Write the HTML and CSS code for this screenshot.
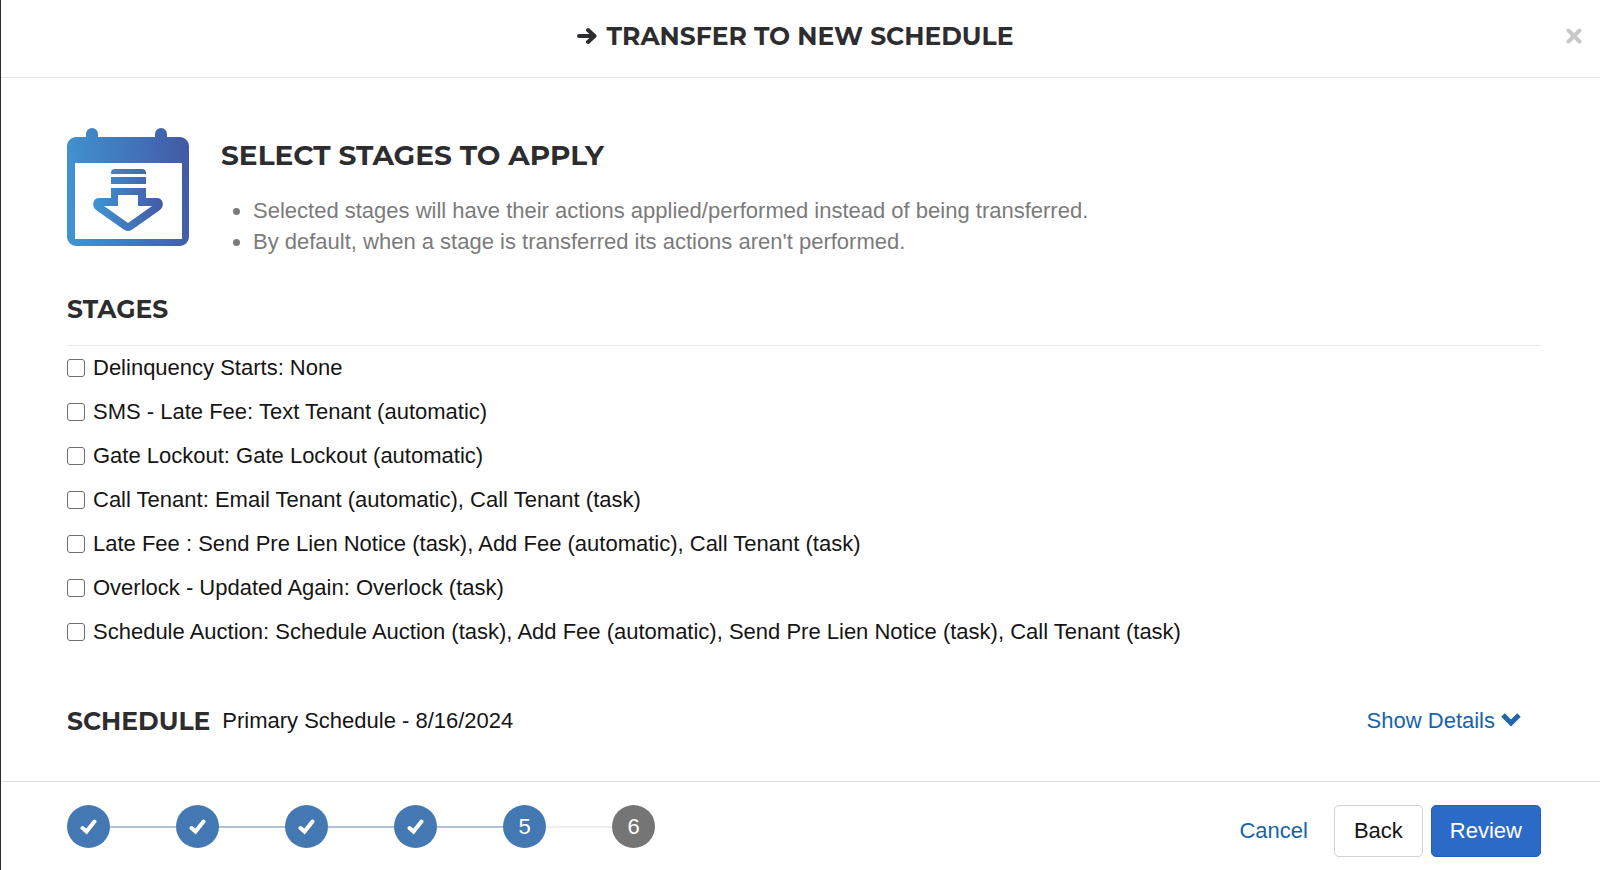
FILE: index.html
```html
<!DOCTYPE html>
<html lang="en">
<head>
<meta charset="utf-8">
<title>Transfer to New Schedule</title>
<link rel="stylesheet" href="styles.css">
</head>
<body>
<div class="modal" role="dialog" aria-labelledby="modal-title">
  <header class="modal-header">
    <h1 class="modal-title" id="modal-title">
      <svg class="icon-arrow" viewBox="0 0 20 18" aria-hidden="true"><path d="M2 9H17M11 3L17.500 9L11 15"/></svg>
      <span>TRANSFER TO NEW SCHEDULE</span>
    </h1>
    <button class="close" type="button" aria-label="Close">
      <svg class="icon-close" viewBox="0 0 16 16" aria-hidden="true"><path d="M2.500 2.500L13.500 13.500M13.500 2.500L2.500 13.500"/></svg>
    </button>
  </header>

  <main class="modal-body">
    <section class="intro">
      <svg class="icon-calendar" viewBox="0 0 122 120" aria-hidden="true">
        <defs>
          <linearGradient id="frame" gradientUnits="userSpaceOnUse" x1="0" y1="45" x2="122" y2="30"><stop offset="0" stop-color="#4093d0"/><stop offset="1" stop-color="#435aa6"/></linearGradient>
          <linearGradient id="arrow" gradientUnits="userSpaceOnUse" x1="28" y1="72" x2="96" y2="72"><stop offset="0" stop-color="#4093d0"/><stop offset="1" stop-color="#435aa6"/></linearGradient>
        </defs>
        <path fill="url(#frame)" fill-rule="evenodd" d="M9 10H19V7A6 6 0 0 1 31 7V10H88V7A6 6 0 0 1 100 7V10H113A9 9 0 0 1 122 19V110A9 9 0 0 1 113 119H9A9 9 0 0 1 0 110V19A9 9 0 0 1 9 10ZM8 36V112H115V36Z"/>
        <path fill="url(#arrow)" d="M44 47V46A4 4 0 0 1 48 42H75A4 4 0 0 1 79 46V47ZM44 50H79V57H44Z"/>
        <path fill="url(#arrow)" fill-rule="evenodd" d="M44 61H79V71H90C96 71 98 79 93 83L66 102Q61 106 56 102L29 83C24 79 26 71 32 71H44ZM51 68V79H37L61 96L85 79H71V68Z"/>
      </svg>
      <div class="intro-text">
        <h2 class="intro-title">SELECT STAGES TO APPLY</h2>
        <ul class="notes">
          <li>Selected stages will have their actions applied/performed instead of being transferred.</li>
          <li>By default, when a stage is transferred its actions aren't performed.</li>
        </ul>
      </div>
    </section>

    <section class="stages">
      <h2 class="section-title stages-title">STAGES</h2>
      <label class="stage"><input type="checkbox">Delinquency Starts: None</label>
      <label class="stage"><input type="checkbox">SMS - Late Fee: Text Tenant (automatic)</label>
      <label class="stage"><input type="checkbox">Gate Lockout: Gate Lockout (automatic)</label>
      <label class="stage"><input type="checkbox">Call Tenant: Email Tenant (automatic), Call Tenant (task)</label>
      <label class="stage"><input type="checkbox">Late Fee : Send Pre Lien Notice (task), Add Fee (automatic), Call Tenant (task)</label>
      <label class="stage"><input type="checkbox">Overlock - Updated Again: Overlock (task)</label>
      <label class="stage"><input type="checkbox">Schedule Auction: Schedule Auction (task), Add Fee (automatic), Send Pre Lien Notice (task), Call Tenant (task)</label>
    </section>

    <section class="schedule">
      <h2 class="section-title">SCHEDULE</h2>
      <span class="schedule-name">Primary Schedule - 8/16/2024</span>
      <a class="details" href="#details">Show Details
        <svg class="icon-chevron" viewBox="0 0 20 18" aria-hidden="true"><path d="M2 3L10 11L18 3"/></svg>
      </a>
    </section>
  </main>

  <footer class="modal-footer">
    <ol class="steps">
      <li class="step"><span class="dot"><svg class="icon-check" viewBox="0 0 18 16" aria-label="Step 1 done"><path d="M2.500 9L6.500 12.500L14.500 2.500"/></svg></span></li>
      <li class="step"><span class="dot"><svg class="icon-check" viewBox="0 0 18 16" aria-label="Step 2 done"><path d="M2.500 9L6.500 12.500L14.500 2.500"/></svg></span></li>
      <li class="step"><span class="dot"><svg class="icon-check" viewBox="0 0 18 16" aria-label="Step 3 done"><path d="M2.500 9L6.500 12.500L14.500 2.500"/></svg></span></li>
      <li class="step"><span class="dot"><svg class="icon-check" viewBox="0 0 18 16" aria-label="Step 4 done"><path d="M2.500 9L6.500 12.500L14.500 2.500"/></svg></span></li>
      <li class="step" aria-current="step"><span class="dot">5</span></li>
      <li class="step step-todo"><span class="dot">6</span></li>
    </ol>
    <div class="actions">
      <a class="cancel" href="#cancel">Cancel</a>
      <button class="btn" type="button">Back</button>
      <button class="btn btn-primary" type="button">Review</button>
    </div>
  </footer>
</div>
</body>
</html>
```

FILE: styles.css
```css
*, *::before, *::after { box-sizing: border-box; }

body {
  margin: 0;
  background: #fff;
  color: #151515;
  font: 22px/30px "Helvetica Neue", "Liberation Sans", Arial, sans-serif;
  text-rendering: optimizeLegibility;
}

h1, h2, ul, ol { margin: 0; padding: 0; }
ol { list-style: none; }
svg { display: block; flex: none; fill: none; }
a { color: #1763ab; text-decoration: none; }
button { font: inherit; cursor: pointer; }

.modal {
  display: flex;
  flex-direction: column;
  min-height: 100vh;
  border-left: 1px solid #2b2b2e;
}

.modal-header {
  display: flex;
  align-items: center;
  padding: 18px 13px 23px 28px;
  border-bottom: 1px solid #e6e6e6;
}

.modal-title, .intro-title, .section-title {
  color: #2d2d2f;
  font-family: Montserrat, Inter, sans-serif;
  font-weight: 700;
}

.modal-title {
  display: flex;
  flex: 1;
  align-items: center;
  justify-content: center;
  gap: 10px;
  font-size: 25px;
  line-height: 36px;
}

.icon-arrow { width: 20px; height: 18px; stroke: #2d2d2f; stroke-width: 4; stroke-linecap: round; stroke-linejoin: round; }

.close {
  padding: 5px;
  border: 0;
  background: none;
}

.icon-close { width: 16px; height: 16px; stroke: #c8c8c8; stroke-width: 4; stroke-linecap: round; }

.modal-body { flex: 1; padding: 49px 59px 0 66px; }

.intro { display: flex; gap: 32px; }
.icon-calendar { width: 122px; height: 120px; }
.intro-text { padding-top: 10px; }
.intro-title { font-size: 28px; line-height: 36px; }

.notes {
  margin-top: 22px;
  padding-left: 32px;
  color: #7b7b7b;
  line-height: 31px;
}

.stages { margin-top: 34px; }
.section-title { font-size: 25px; line-height: 36px; }
.stages-title { padding-bottom: 18px; border-bottom: 1px solid #e9e9e9; }

.stage { display: flex; align-items: center; gap: 8px; min-height: 44px; }

.stage input {
  flex: none;
  appearance: none;
  width: 18px;
  height: 18px;
  margin: 0;
  border: 1px solid #6f6f6f;
  border-radius: 3px;
  background: #fff;
}

.stage input:checked { background: #2c6ac8; }

.schedule {
  display: flex;
  align-items: center;
  gap: 12px;
  margin-top: 49px;
  padding-right: 20px;
}

.details { display: flex; align-items: center; gap: 6px; margin-left: auto; }
.icon-chevron { width: 20px; height: 18px; stroke: #1f66ad; stroke-width: 5; }

.modal-footer {
  display: flex;
  align-items: flex-start;
  justify-content: space-between;
  padding: 23px 59px 13px 66px;
  border-top: 1px solid #dedede;
}

.steps { display: flex; }
.step { display: flex; align-items: center; }
.step + .step::before { content: ""; width: 66px; height: 2px; background: #b0c1d8; }
.step + .step-todo::before { background: #eee; }

.dot {
  display: flex;
  align-items: center;
  justify-content: center;
  width: 43px;
  height: 43px;
  border-radius: 50%;
  background: #4478b3;
  color: #fff;
}

.step-todo .dot { background: #757575; }
.icon-check { width: 18px; height: 16px; stroke: #fff; stroke-width: 4; stroke-linecap: round; }

.actions { display: flex; align-items: center; }
.cancel { margin-right: 26px; }

.btn {
  padding: 10px 19px;
  border: 1px solid #d2d2d2;
  border-radius: 5px;
  background: #fff;
  color: #151515;
}

.btn-primary { margin-left: 8px; padding: 10px 18px; border-color: #1e60c4; background: #2c6ac8; color: #fff; }
```
